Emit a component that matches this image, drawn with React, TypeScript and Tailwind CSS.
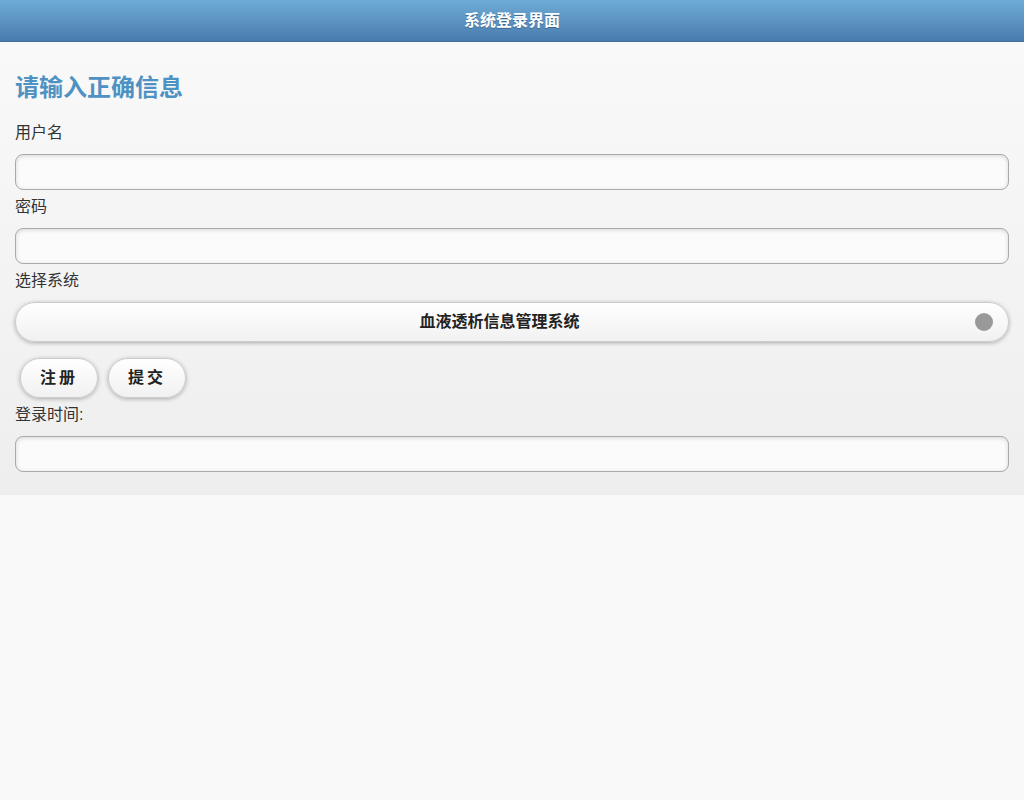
import React from "react";

const font = { fontFamily: '"Liberation Sans", "Noto Sans CJK SC", sans-serif' };

function Field({ label }: { label: string }) {
  return (
    <div className="pb-[5px]">
      <div className="text-[16px] leading-[22px] text-[#333] pt-[1px]">{label}</div>
      <div className="mt-[10px] h-[36px] rounded-[8px] border border-[#aaa] bg-[#fbfbfb] shadow-[inset_0_1px_4px_rgba(0,0,0,0.15)]" />
    </div>
  );
}

export default function App() {
  return (
    <div className="min-h-[800px] bg-[#f9f9f9]" style={font}>
      <div className="h-[42px] flex items-center justify-center border-b border-[#456f9a] bg-gradient-to-b from-[#6facd5] to-[#497bae]">
        <span className="text-white text-[16px] font-bold [text-shadow:0_1px_0_#3e6790]">系统登录界面</span>
      </div>
      <div className="bg-gradient-to-b from-[#f9f9f9] to-[#eeeeee] px-[15px] pt-[28px] pb-[18px]">
        <h2 className="text-[24px] leading-[36px] font-bold text-[#4e92c3]">请输入正确信息</h2>
        <div className="mt-[15px]">
          <Field label="用户名" />
          <Field label="密码" />
          <div>
            <div className="text-[16px] leading-[22px] text-[#333] pt-[1px]">选择系统</div>
            <div className="mt-[10px] relative h-[40px] rounded-full border border-[#ccc] bg-gradient-to-b from-[#ffffff] to-[#f1f1f1] shadow-[0_1px_4px_rgba(0,0,0,0.3)] flex items-center justify-center pl-[15px] pr-[40px]">
              <span className="text-[16px] font-bold text-[#222]">血液透析信息管理系统</span>
              <span className="absolute right-[15px] top-[10px] w-[18px] h-[18px] rounded-full bg-[#999]" />
            </div>
          </div>
          <div className="flex gap-[10px] mt-[16px] ml-[5px] mb-[5px]">
            <button className="w-[78px] h-[40px] rounded-full border border-[#ccc] bg-gradient-to-b from-[#ffffff] to-[#f1f1f1] shadow-[0_1px_4px_rgba(0,0,0,0.3)] text-[16px] font-bold text-[#222] tracking-[3px]">注册</button>
            <button className="w-[78px] h-[40px] rounded-full border border-[#ccc] bg-gradient-to-b from-[#ffffff] to-[#f1f1f1] shadow-[0_1px_4px_rgba(0,0,0,0.3)] text-[16px] font-bold text-[#222] tracking-[3px]">提交</button>
          </div>
          <Field label="登录时间:" />
        </div>
      </div>
    </div>
  );
}
